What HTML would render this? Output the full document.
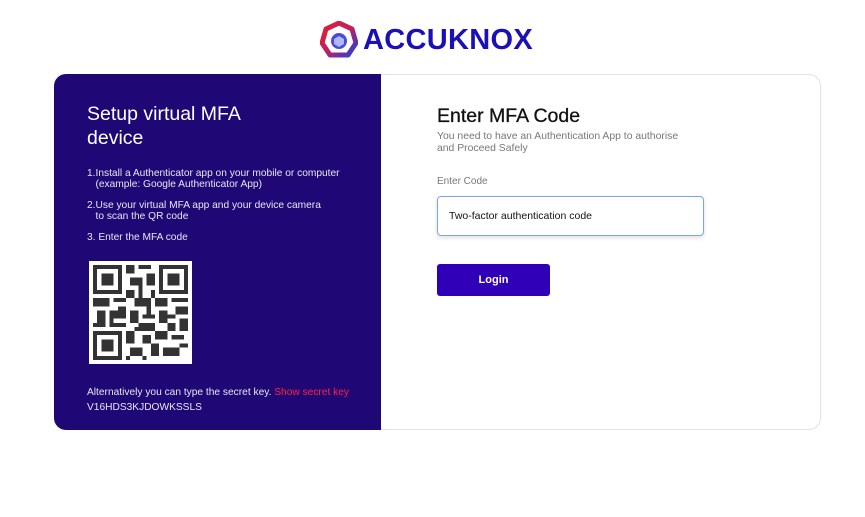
<!DOCTYPE html>
<html><head><meta charset="utf-8"><style>
body{margin:0;width:865px;height:517px;background:#fff;font-family:"Liberation Sans",sans-serif;position:relative;overflow:hidden}
.logo{position:absolute;left:320px;top:21px;display:flex;align-items:center}
.logo span{font-size:29px;font-weight:bold;color:#1a0fb8;letter-spacing:0.3px;margin-left:5px}
.left{position:absolute;left:54px;top:74px;width:327px;height:356px;background:#1f0875;border-radius:12px 0 0 12px;color:#fff}
.right{position:absolute;left:381px;top:74px;width:439px;height:354px;border:1px solid #e3e3e8;border-left:none;border-radius:0 12px 12px 0}
h1{position:absolute;left:33px;top:28px;margin:0;font-size:19.5px;font-weight:normal;line-height:24px}
.s{position:absolute;left:33px;font-size:10.2px;line-height:11px;color:#e8e6f5;white-space:nowrap}
h2{position:absolute;left:56px;top:30px;margin:0;font-size:19.5px;font-weight:normal;color:#111;-webkit-text-stroke:0.3px #111}
.sub{position:absolute;left:56px;top:56px;font-size:10.4px;line-height:12px;color:#777}
.lab{position:absolute;left:56px;top:101px;font-size:10px;color:#777}
.inp{position:absolute;left:56px;top:121px;width:267px;height:40px;border:1px solid #7aa3f0;border-radius:4px;box-shadow:0 2px 5px rgba(0,0,0,.12);font-size:10.5px;line-height:38px;padding-left:11px;box-sizing:border-box;color:#111}
.btn{position:absolute;left:56px;top:189px;width:113px;height:32px;background:#2f00b8;border-radius:3px;color:#fff;font-size:11px;font-weight:bold;text-align:center;line-height:32px}
</style></head><body>
<div class="logo">
<svg width="38" height="38" viewBox="0 0 38 38"><defs><linearGradient id="g" x1="0" y1="0" x2="1" y2="1"><stop offset="0" stop-color="#e02030"/><stop offset="0.5" stop-color="#c02060"/><stop offset="1" stop-color="#2040e0"/></linearGradient></defs><polygon points="19,2 32,8 36,22 28,34 10,34 2,22 6,8" fill="none" stroke="url(#g)" stroke-width="5" stroke-linejoin="round"/><circle cx="19" cy="20" r="8" fill="#4a4ad8"/><polygon points="19,15 24,18 24,23 19,26 14,23 14,18" fill="#b0b8ff"/></svg>
<span>ACCUKNOX</span></div>
<div class="left">
<h1>Setup virtual MFA<br>device</h1>
<div class="s" style="top:94px">1.Install a Authenticator app on your mobile or computer<br>&nbsp;&nbsp;&nbsp;(example: Google Authenticator App)</div>
<div class="s" style="top:126px">2.Use your virtual MFA app and your device camera<br>&nbsp;&nbsp;&nbsp;to scan the QR code</div>
<div class="s" style="top:158px">3. Enter the MFA code</div>
<svg style="position:absolute;left:35px;top:187px" width="103" height="103" viewBox="0 0 25 25" shape-rendering="crispEdges">
<rect width="25" height="25" fill="#fff"/>
<g fill="#333">
<path d="M1 1h7v7h-7zM2 2v5h5v-5zM3 3h3v3h-3z" fill-rule="evenodd"/>
<path d="M17 1h7v7h-7zM18 2v5h5v-5zM19 3h3v3h-3z" fill-rule="evenodd"/>
<path d="M1 17h7v7h-7zM2 18v5h5v-5zM3 19h3v3h-3z" fill-rule="evenodd"/>
<rect x="9" y="1" width="2" height="2"/><rect x="12" y="1" width="3" height="1"/><rect x="10" y="4" width="3" height="2"/><rect x="14" y="3" width="2" height="3"/><rect x="9" y="7" width="2" height="2"/><rect x="12" y="6" width="1" height="3"/><rect x="15" y="7" width="1" height="2"/>
<rect x="1" y="9" width="4" height="2"/><rect x="6" y="9" width="3" height="1"/><rect x="11" y="9" width="4" height="2"/><rect x="16" y="9" width="3" height="2"/><rect x="20" y="9" width="4" height="1"/><rect x="7" y="11" width="2" height="1"/>
<rect x="2" y="12" width="2" height="3"/><rect x="5" y="12" width="4" height="2"/><rect x="10" y="12" width="2" height="3"/><rect x="13" y="13" width="3" height="1"/><rect x="17" y="12" width="2" height="3"/><rect x="21" y="11" width="3" height="2"/><rect x="14" y="11" width="1" height="2"/><rect x="19" y="13" width="2" height="1"/>
<rect x="1" y="15" width="3" height="1"/><rect x="6" y="15" width="3" height="1"/><rect x="12" y="15" width="4" height="2"/><rect x="19" y="15" width="2" height="2"/><rect x="22" y="14" width="2" height="3"/><rect x="5" y="14" width="1" height="2"/>
<rect x="9" y="17" width="2" height="3"/><rect x="13" y="18" width="2" height="2"/><rect x="16" y="17" width="3" height="2"/><rect x="20" y="18" width="3" height="1"/><rect x="11" y="16" width="1" height="1"/>
<rect x="10" y="21" width="3" height="2"/><rect x="15" y="20" width="2" height="3"/><rect x="18" y="21" width="4" height="2"/><rect x="22" y="20" width="2" height="1"/><rect x="9" y="23" width="1" height="1"/><rect x="13" y="23" width="1" height="1"/>
</g></svg>
<div class="s" style="top:313px">Alternatively you can type the secret key. <span style="color:#ff2040">Show secret key</span></div>
<div class="s" style="top:328px">V16HDS3KJDOWKSSLS</div>
</div>
<div class="right">
<h2>Enter MFA Code</h2>
<div class="sub">You need to have an Authentication App to authorise<br>and Proceed Safely</div>
<div class="lab">Enter Code</div>
<div class="inp">Two-factor authentication code</div>
<div class="btn">Login</div>
</div>
</body></html>
